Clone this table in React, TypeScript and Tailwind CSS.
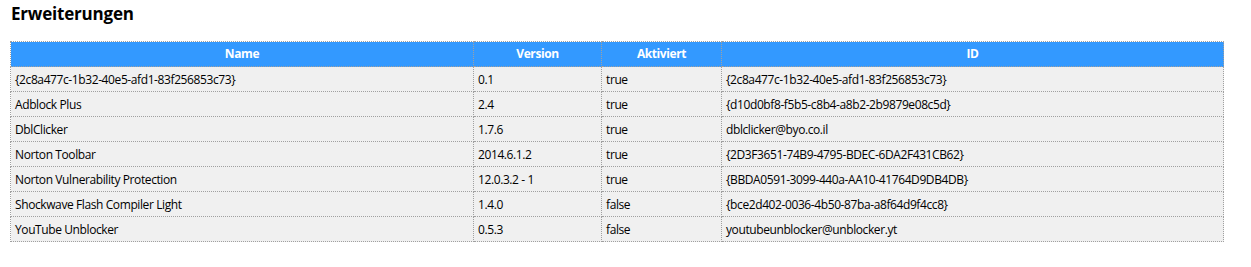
const rows = [
  ["{2c8a477c-1b32-40e5-afd1-83f256853c73}", "0.1", "true", "{2c8a477c-1b32-40e5-afd1-83f256853c73}"],
  ["Adblock Plus", "2.4", "true", "{d10d0bf8-f5b5-c8b4-a8b2-2b9879e08c5d}"],
  ["DblClicker", "1.7.6", "true", "dblclicker@byo.co.il"],
  ["Norton Toolbar", "2014.6.1.2", "true", "{2D3F3651-74B9-4795-BDEC-6DA2F431CB62}"],
  ["Norton Vulnerability Protection", "12.0.3.2 - 1", "true", "{BBDA0591-3099-440a-AA10-41764D9DB4DB}"],
  ["Shockwave Flash Compiler Light", "1.4.0", "false", "{bce2d402-0036-4b50-87ba-a8f64d9f4cc8}"],
  ["YouTube Unblocker", "0.5.3", "false", "youtubeunblocker@unblocker.yt"],
];

export default function App() {
  return (
    <main className="h-[267px] w-[1251px] bg-white font-['Open_Sans',sans-serif] text-black">
      <h1 className="px-[11px] pt-[3px] text-[17px] leading-[22px] font-bold tracking-[-0.2px]">Erweiterungen</h1>
      <div className="pl-[10px] pt-[16px]">
        <table className="w-[1214px] table-fixed border-collapse border border-dotted border-[#8c8c8c] text-[12px] tracking-[-0.4px]">
          <colgroup>
            <col className="w-[463px]" />
            <col className="w-[128px]" />
            <col className="w-[120px]" />
            <col />
          </colgroup>
          <thead>
            <tr className="h-[25px] bg-[#3399ff] text-white">
              {["Name", "Version", "Aktiviert", "ID"].map((h) => (
                <th key={h} className="border border-dotted border-[#a0a0a0] p-0 text-center font-bold">
                  {h}
                </th>
              ))}
            </tr>
          </thead>
          <tbody>
            {rows.map((r) => (
              <tr key={r[0]} className="h-[25px] bg-[#f0f0f0]">
                {r.map((c, i) => (
                  <td key={i} className="border border-dotted border-[#a0a0a0] px-[4px] pt-[1px] pb-0 whitespace-nowrap">
                    {c}
                  </td>
                ))}
              </tr>
            ))}
          </tbody>
        </table>
      </div>
    </main>
  );
}
